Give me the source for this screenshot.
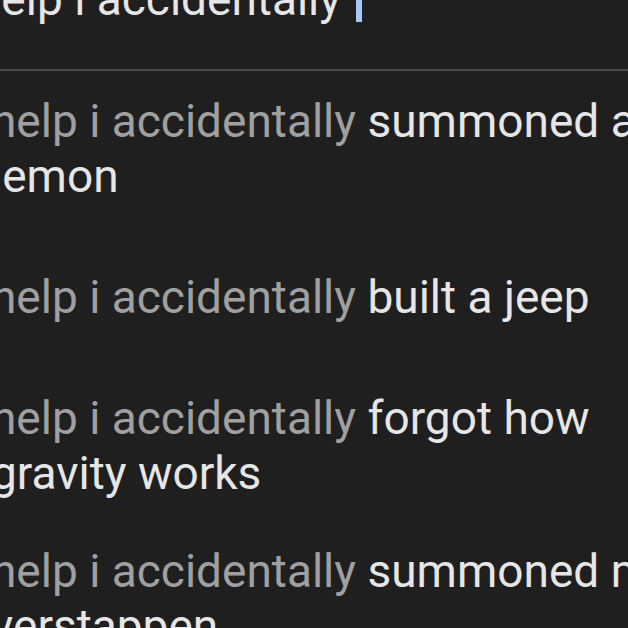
import React from 'react';

const suggestions = [
  { rest: ['summoned a', 'lemon'], gap: 'mt-[23px]' },
  { rest: ['built a jeep'], gap: 'mt-[66px]' },
  { rest: ['forgot how', 'gravity works'], gap: 'mt-[66px]' },
  { rest: ['summoned max', 'verstappen'], gap: 'mt-[43px]' },
];

const Suggestion = ({ rest, gap }) => (
  <li className={`${gap} -ml-[9px] whitespace-nowrap`}>
    <div>
      <span className="text-[#a0a0a0]">help i accidentally</span>{' '}
      <span className="text-[#e6e6e6]">{rest[0]}</span>
    </div>
    {rest[1] && <div className="text-[#e6e6e6]">{rest[1]}</div>}
  </li>
);

const App = () => {
  return (
    <div className="h-[628px] w-[628px] overflow-hidden bg-[#1f1f1f] font-['Roboto',sans-serif] text-[46px] leading-[55px]">
      <div className="-mt-[28px] -ml-[24px] whitespace-nowrap text-[#e6e6e6]">
        help i accidentally
        <span className="ml-[15px] inline-block h-[50px] w-[6px] bg-[#a8c7fa] align-[-7px]" />
      </div>
      <div className="mt-[42px] h-[2px] bg-[#474747]" />
      <ul>
        {suggestions.map((s, i) => (
          <Suggestion key={i} rest={s.rest} gap={s.gap} />
        ))}
      </ul>
    </div>
  );
};

export default App;
